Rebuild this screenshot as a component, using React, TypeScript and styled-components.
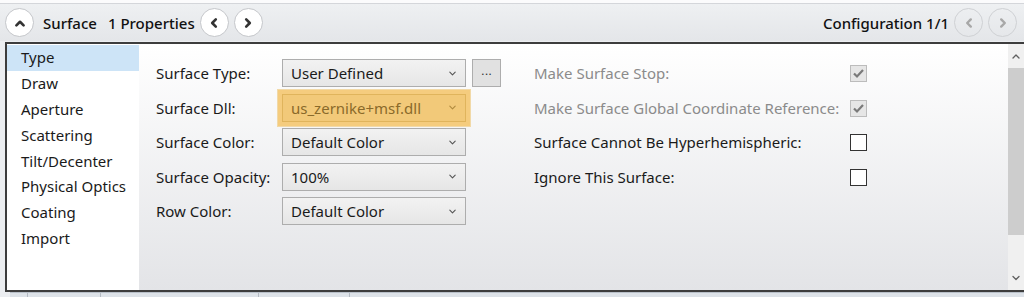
import styled, { createGlobalStyle } from 'styled-components';

const GlobalStyle = createGlobalStyle`
  html, body {
    margin: 0;
    padding: 0;
    background: #eef0f2;
  }
  body {
    font-family: 'Noto Sans', 'Open Sans', sans-serif;
    color: #1a1a1a;
  }
`;

const Page = styled.div`
  width: 1024px;
  height: 297px;
  overflow: hidden;
  display: flex;
  flex-direction: column;
  background: #eceef1;
`;
const TopStrip = styled.div`
  height: 3px;
  background: #fbfbfc;
  border-bottom: 1px solid #d4d6da;
`;
const Toolbar = styled.div`
  height: 37px;
  display: flex;
  align-items: center;
  padding: 0 7px 0 5px;
  background: linear-gradient(#eef0f2, #e4e6e9);
  font-size: 15px;
  font-weight: 500;
  color: #111;
`;
const Title = styled.span`
  margin-left: 4px;
  margin-right: 5px;
  white-space: nowrap;
  span {
    margin-left: 11px;
  }
`;
const Spacer = styled.div`
  flex: 1;
`;
const RoundButton = styled.button<{ disabled?: boolean }>`
  width: 29px;
  height: 29px;
  padding: 0;
  margin-right: 5px;
  border-radius: 50%;
  border: 1px solid ${(p) => (p.disabled ? '#cfd1d4' : '#c4c6ca')};
  background: ${(p) => (p.disabled ? 'transparent' : '#ffffff')};
  color: ${(p) => (p.disabled ? '#a8a8a8' : '#333')};
  display: flex;
  align-items: center;
  justify-content: center;
  svg {
    display: block;
  }
  &:last-child {
    margin-right: 0;
  }
`;
const Panel = styled.div`
  height: 246px;
  margin-left: 5px;
  margin-top: 1px;
  border-top: 2px solid #3d3d3d;
  border-left: 2px solid #3d3d3d;
  border-bottom: 2px solid #3d3d3d;
  display: flex;
`;
const Sidebar = styled.ul`
  width: 132px;
  margin: 0;
  padding: 1px 0 0;
  list-style: none;
  background: #fff;
  font-size: 15px;
`;
const NavItem = styled.li<{ active?: boolean }>`
  height: 25.9px;
  line-height: 24px;
  padding-left: 14px;
  background: ${(p) => (p.active ? '#cde4f7' : 'transparent')};
`;
const Content = styled.div`
  flex: 1;
  display: flex;
  gap: 34px;
  padding: 15px 0 0 17px;
  background: linear-gradient(#ffffff, #e3e4e7);
  font-size: 15px;
`;
const Form = styled.div`
  display: grid;
  grid-template-columns: 126px 184px 34px;
  grid-auto-rows: 34.5px;
  align-items: start;
`;
const Label = styled.div<{ muted?: boolean }>`
  height: 28px;
  line-height: 28px;
  white-space: nowrap;
  color: ${(p) => (p.muted ? '#8b8b8b' : '#1a1a1a')};
`;
const Combo = styled.div<{ highlight?: boolean }>`
  height: 28px;
  box-sizing: border-box;
  border: 1px solid ${(p) => (p.highlight ? '#e0b45c' : '#adadad')};
  background: ${(p) => (p.highlight ? '#f2c979' : 'linear-gradient(#f2f2f2, #e6e6e6)')};
  color: ${(p) => (p.highlight ? '#8a6a2a' : '#1a1a1a')};
  display: flex;
  align-items: center;
  padding: 0 8px 0 8px;
  justify-content: space-between;
  ${(p) => (p.highlight ? `box-shadow: 0 0 0 4px #f5cc7e, 0 0 0 5px #f1d9a8;` : '')}
`;
const Browse = styled.button`
  width: 29px;
  height: 28px;
  margin-left: 6px;
  box-sizing: border-box;
  border: 1px solid #adadad;
  background: #e1e1e1;
  font-size: 13px;
  padding: 0 0 5px;
  color: #333;
`;
const Checks = styled.div`
  display: grid;
  grid-template-columns: 316px 20px;
  grid-auto-rows: 34.5px;
  align-items: start;
`;
const Box = styled.div<{ disabled?: boolean }>`
  width: 17px;
  height: 17px;
  margin-top: 6px;
  box-sizing: border-box;
  border: 1px solid ${(p) => (p.disabled ? '#bcbcbc' : '#333')};
  background: ${(p) => (p.disabled ? '#e6e6e6' : '#fff')};
  display: flex;
  align-items: center;
  justify-content: center;
`;
const Scrollbar = styled.div`
  width: 16px;
  display: flex;
  flex-direction: column;
  align-items: center;
  background: #f0f0f0;
  margin-left: auto;
`;
const Arrow = styled.div`
  height: 24px;
  display: flex;
  align-items: center;
  justify-content: center;
`;
const Thumb = styled.div`
  width: 16px;
  height: 167px;
  background: #cdcdcd;
`;
const Track = styled.div`
  flex: 1;
`;
const BottomStrip = styled.div`
  flex: 1;
  margin-left: 10px;
  display: flex;
  background: #dde2e8;
  border-top: 1px solid #b9c0c9;
  div {
    border-right: 1px solid #b4bac2;
  }
`;
const Tab = styled.div<{ w: number }>`
  width: ${(p) => p.w}px;
`;

const Chevron = ({ dir, size = 10, color = 'currentColor', width = 2 }: { dir: 'up' | 'down' | 'left' | 'right'; size?: number; color?: string; width?: number }) => {
  const d = {
    up: 'M2 7 L5 4 L8 7',
    down: 'M2 3.5 L5 6.5 L8 3.5',
    left: 'M6.5 2 L3.5 5 L6.5 8',
    right: 'M3.5 2 L6.5 5 L3.5 8',
  }[dir];
  return (
    <svg width={size} height={size} viewBox="0 0 10 10">
      <path d={d} fill="none" stroke={color} strokeWidth={width} strokeLinecap="round" strokeLinejoin="round" />
    </svg>
  );
};

const Check = () => (
  <svg width="13" height="13" viewBox="0 0 13 13">
    <path d="M2 6.5 L5 9.5 L11 3" fill="none" stroke="#7a7a7a" strokeWidth="2.2" />
  </svg>
);

const navItems = ['Type', 'Draw', 'Aperture', 'Scattering', 'Tilt/Decenter', 'Physical Optics', 'Coating', 'Import'];

const fields = [
  { label: 'Surface Type:', value: 'User Defined', browse: true },
  { label: 'Surface Dll:', value: 'us_zernike+msf.dll', highlight: true },
  { label: 'Surface Color:', value: 'Default Color' },
  { label: 'Surface Opacity:', value: '100%' },
  { label: 'Row Color:', value: 'Default Color' },
];

const options = [
  { label: 'Make Surface Stop:', checked: true, disabled: true },
  { label: 'Make Surface Global Coordinate Reference:', checked: true, disabled: true },
  { label: 'Surface Cannot Be Hyperhemispheric:' },
  { label: 'Ignore This Surface:' },
];

export default function App() {
  return (
    <>
      <GlobalStyle />
      <Page>
        <TopStrip />
        <Toolbar>
          <RoundButton>
            <Chevron dir="up" size={12} width={2.2} />
          </RoundButton>
          <Title>
            Surface<span>1 Properties</span>
          </Title>
          <RoundButton>
            <Chevron dir="left" size={12} width={2.2} />
          </RoundButton>
          <RoundButton>
            <Chevron dir="right" size={12} width={2.2} />
          </RoundButton>
          <Spacer />
          <Title>Configuration 1/1</Title>
          <RoundButton disabled>
            <Chevron dir="left" size={12} width={2} />
          </RoundButton>
          <RoundButton disabled>
            <Chevron dir="right" size={12} width={2} />
          </RoundButton>
        </Toolbar>
        <Panel>
          <Sidebar>
            {navItems.map((n, i) => (
              <NavItem key={n} active={i === 0}>
                {n}
              </NavItem>
            ))}
          </Sidebar>
          <Content>
            <Form>
              {fields.map((f) => (
                <>
                  <Label key={f.label}>{f.label}</Label>
                  <Combo highlight={f.highlight}>
                    <span>{f.value}</span>
                    <Chevron dir="down" size={9} width={1.2} color={f.highlight ? '#b08a3e' : '#555'} />
                  </Combo>
                  <div>{f.browse && <Browse>...</Browse>}</div>
                </>
              ))}
            </Form>
            <Checks>
              {options.map((o) => (
                <>
                  <Label key={o.label} muted={o.disabled}>
                    {o.label}
                  </Label>
                  <Box disabled={o.disabled}>{o.checked && <Check />}</Box>
                </>
              ))}
            </Checks>
          </Content>
          <Scrollbar>
            <Arrow>
              <Chevron dir="up" size={10} width={1.3} color="#606060" />
            </Arrow>
            <Thumb />
            <Track />
            <Arrow>
              <Chevron dir="down" size={10} width={1.3} color="#606060" />
            </Arrow>
          </Scrollbar>
        </Panel>
        <BottomStrip>
          <Tab w={17} />
          <Tab w={72} />
          <Tab w={157} />
          <Tab w={90} />
        </BottomStrip>
      </Page>
    </>
  );
}
